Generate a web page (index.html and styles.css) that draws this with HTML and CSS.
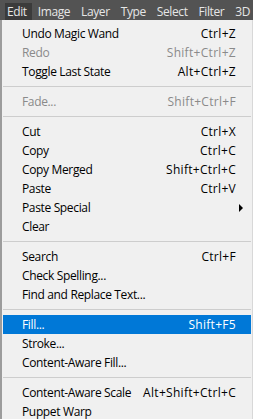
FILE: index.html
```html
<!DOCTYPE html>
<html>
<head>
  <title>Edit Menu</title>
  <link rel="stylesheet" href="styles.css">
</head>
<body>
  <div class="menubar">
    <span class="menubar-item active">Edit</span>
    <span class="menubar-item">Image</span>
    <span class="menubar-item">Layer</span>
    <span class="menubar-item">Type</span>
    <span class="menubar-item">Select</span>
    <span class="menubar-item">Filter</span>
    <span class="menubar-item">3D</span>
  </div>
  <div class="menu">
    <div class="item"><span>Undo Magic Wand</span><span class="key">Ctrl+Z</span></div>
    <div class="item disabled"><span>Redo</span><span class="key">Shift+Ctrl+Z</span></div>
    <div class="item"><span>Toggle Last State</span><span class="key">Alt+Ctrl+Z</span></div>
    <div class="sep"></div>
    <div class="item disabled"><span>Fade...</span><span class="key">Shift+Ctrl+F</span></div>
    <div class="sep"></div>
    <div class="item"><span>Cut</span><span class="key">Ctrl+X</span></div>
    <div class="item"><span>Copy</span><span class="key">Ctrl+C</span></div>
    <div class="item"><span>Copy Merged</span><span class="key">Shift+Ctrl+C</span></div>
    <div class="item"><span>Paste</span><span class="key">Ctrl+V</span></div>
    <div class="item"><span>Paste Special</span><span class="arrow"></span></div>
    <div class="item"><span>Clear</span></div>
    <div class="sep"></div>
    <div class="item"><span>Search</span><span class="key">Ctrl+F</span></div>
    <div class="item"><span>Check Spelling...</span></div>
    <div class="item"><span>Find and Replace Text...</span></div>
    <div class="sep"></div>
    <div class="item selected"><span>Fill...</span><span class="key">Shift+F5</span></div>
    <div class="item"><span>Stroke...</span></div>
    <div class="item"><span>Content-Aware Fill...</span></div>
    <div class="sep"></div>
    <div class="item"><span>Content-Aware Scale</span><span class="key">Alt+Shift+Ctrl+C</span></div>
    <div class="item"><span>Puppet Warp</span></div>
  </div>
</body>
</html>
```

FILE: styles.css
```css
body {
  margin: 0;
  width: 253px;
  height: 419px;
  overflow: hidden;
  font-family: "Open Sans", "Noto Sans", sans-serif;
  font-size: 12px;
  background-color: #f0f0f0;
}

.menubar {
  display: flex;
  height: 20px;
  padding-left: 5px;
  overflow: hidden;
  background-color: #535353;
  color: #e6e6e6;
  white-space: nowrap;
}

.menubar-item {
  display: flex;
  flex-shrink: 0;
  align-items: center;
  margin-top: 3px;
  padding-bottom: 1px;
  font-size: 12px;
  letter-spacing: -0.4px;
}

.menubar-item + .menubar-item {
  margin-left: 11px;
}

.menubar-item.active {
  padding: 0 5px 1px 2px;
  background-color: #3b3b3b;
}

.menubar-item.active + .menubar-item {
  margin-left: 6px;
}

.menu {
  padding-top: 4px;
  border-left: 2px solid #9c9c9c;
  border-right: 1px solid #d8d8d8;
  height: 395px;
  color: #000;
}

.item {
  display: flex;
  justify-content: space-between;
  align-items: center;
  height: 19px;
  padding: 0 15px 0 19px;
  margin: 0 1px;
  letter-spacing: -0.35px;
  white-space: nowrap;
}

.item.disabled {
  color: #8a8a8a;
}

.item.selected {
  background-color: #0078d7;
  color: #fff;
}

.key {
  letter-spacing: 0.3px;
}

.arrow {
  width: 0;
  height: 0;
  margin-right: -7px;
  border-top: 4px solid transparent;
  border-bottom: 4px solid transparent;
  border-left: 4px solid #000;
}

.sep {
  height: 1px;
  margin: 5px 1px;
  background-color: #cdcdcd;
}
```
